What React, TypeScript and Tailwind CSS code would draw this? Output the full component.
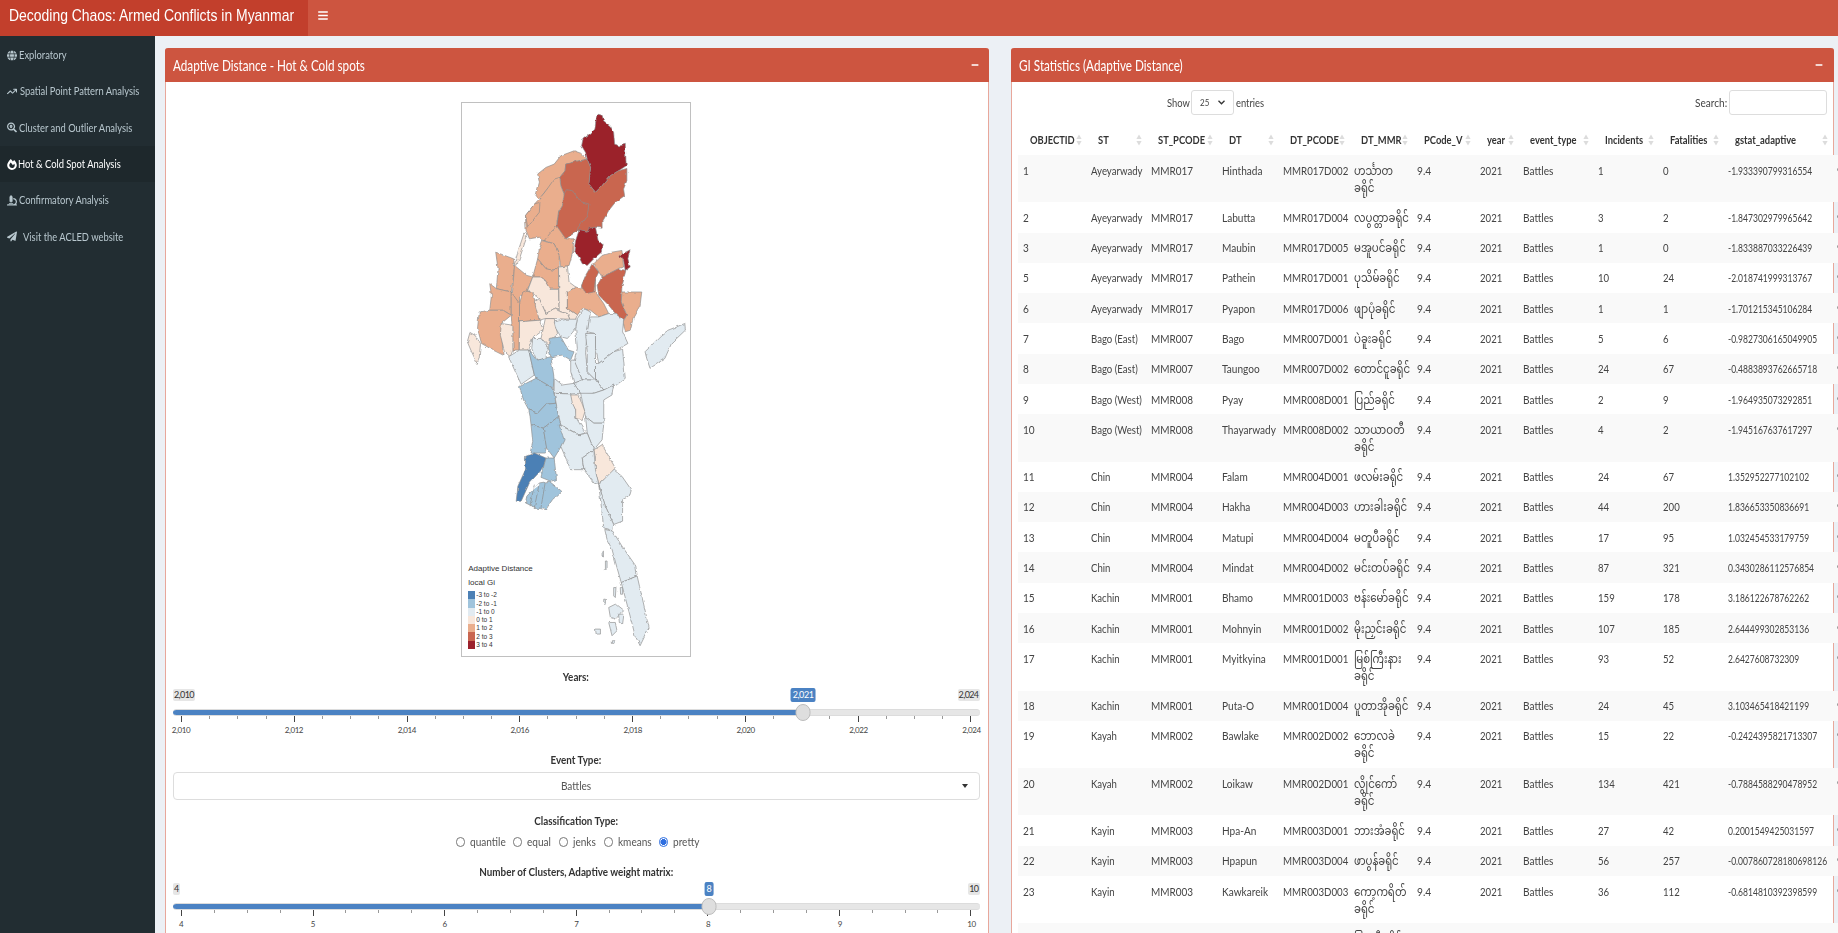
import { FaBars, FaFireAlt, FaGlobe, FaMicroscope, FaMinus, FaPaperPlane, FaSearchLocation } from "react-icons/fa";
import { FaArrowTrendUp } from "react-icons/fa6";
import type { ReactNode } from "react";

const font = "font-['Lato','Noto_Sans_Myanmar',sans-serif]";

const menu = [
  { label: "Exploratory", Icon: FaGlobe, gap: "" },
  { label: "Spatial Point Pattern Analysis", Icon: FaArrowTrendUp, gap: "ml-[1px]" },
  { label: "Cluster and Outlier Analysis", Icon: FaSearchLocation, gap: "" },
  { label: "Hot & Cold Spot Analysis", Icon: FaFireAlt, active: true, gap: "-ml-[1px]" },
  { label: "Confirmatory Analysis", Icon: FaMicroscope, gap: "" },
  { label: "Visit the ACLED website", Icon: FaPaperPlane, gap: "ml-[4px]" },
];

const headers = ["OBJECTID", "ST", "ST_PCODE", "DT", "DT_PCODE", "DT_MMR", "PCode_V", "year", "event_type", "Incidents", "Fatalities", "gstat_adaptive"];

const rows = [
  ["1", "Ayeyarwady", "MMR017", "Hinthada", "MMR017D002", "ဟင်္သာတ\nခရိုင်", "1", "0", "-1.933390799316554"],
  ["2", "Ayeyarwady", "MMR017", "Labutta", "MMR017D004", "လပွတ္တာခရိုင်", "3", "2", "-1.847302979965642"],
  ["3", "Ayeyarwady", "MMR017", "Maubin", "MMR017D005", "မအူပင်ခရိုင်", "1", "0", "-1.833887033226439"],
  ["5", "Ayeyarwady", "MMR017", "Pathein", "MMR017D001", "ပုသိမ်ခရိုင်", "10", "24", "-2.018741999313767"],
  ["6", "Ayeyarwady", "MMR017", "Pyapon", "MMR017D006", "ဖျာပုံခရိုင်", "1", "1", "-1.701215345106284"],
  ["7", "Bago (East)", "MMR007", "Bago", "MMR007D001", "ပဲခူးခရိုင်", "5", "6", "-0.9827306165049905"],
  ["8", "Bago (East)", "MMR007", "Taungoo", "MMR007D002", "တောင်ငူခရိုင်", "24", "67", "-0.4883893762665718"],
  ["9", "Bago (West)", "MMR008", "Pyay", "MMR008D001", "ပြည်ခရိုင်", "2", "9", "-1.964935073292851"],
  ["10", "Bago (West)", "MMR008", "Thayarwady", "MMR008D002", "သာယာဝတီ\nခရိုင်", "4", "2", "-1.945167637617297"],
  ["11", "Chin", "MMR004", "Falam", "MMR004D001", "ဖလမ်းခရိုင်", "24", "67", "1.352952277102102"],
  ["12", "Chin", "MMR004", "Hakha", "MMR004D003", "ဟားခါးခရိုင်", "44", "200", "1.836653350836691"],
  ["13", "Chin", "MMR004", "Matupi", "MMR004D004", "မတူပီခရိုင်", "17", "95", "1.032454533179759"],
  ["14", "Chin", "MMR004", "Mindat", "MMR004D002", "မင်းတပ်ခရိုင်", "87", "321", "0.3430286112576854"],
  ["15", "Kachin", "MMR001", "Bhamo", "MMR001D003", "ဗန်းမော်ခရိုင်", "159", "178", "3.186122678762262"],
  ["16", "Kachin", "MMR001", "Mohnyin", "MMR001D002", "မိုးညှင်းခရိုင်", "107", "185", "2.644499302853136"],
  ["17", "Kachin", "MMR001", "Myitkyina", "MMR001D001", "မြစ်ကြီးနား\nခရိုင်", "93", "52", "2.6427608732309"],
  ["18", "Kachin", "MMR001", "Puta-O", "MMR001D004", "ပူတာအိုခရိုင်", "24", "45", "3.103465418421199"],
  ["19", "Kayah", "MMR002", "Bawlake", "MMR002D002", "ဘောလခဲ\nခရိုင်", "15", "22", "-0.2424395821713307"],
  ["20", "Kayah", "MMR002", "Loikaw", "MMR002D001", "လွိုင်ကော်\nခရိုင်", "134", "421", "-0.7884588290478952"],
  ["21", "Kayin", "MMR003", "Hpa-An", "MMR003D001", "ဘားအံခရိုင်", "27", "42", "0.2001549425031597"],
  ["22", "Kayin", "MMR003", "Hpapun", "MMR003D004", "ဖာပွန်ခရိုင်", "56", "257", "-0.007860728180698126"],
  ["23", "Kayin", "MMR003", "Kawkareik", "MMR003D003", "ကော့ကရိတ်\nခရိုင်", "36", "112", "-0.6814810392398599"],
  ["24", "Kayin", "MMR003", "Myawaddy", "MMR003D002", "မြဝတီခရိုင်", "12", "30", "-0.5120394857120394"],
];

const c = { r3: "#9b212c", r2: "#c96650", r1: "#eaae8d", r0: "#f8e7db", b0: "#e2ebf1", b1: "#a0c4dc", b2: "#4c80b5" };

// coordinates are 3x page pixels, measured from (440,95)
const regions: [string, string][] = [
  [c.r3, "478,55 490,58 495,75 515,90 525,110 528,145 545,150 560,145 563,210 540,225 515,240 490,270 470,290 450,265 455,215 445,190 440,170 428,150 432,130 455,112 468,100 472,70"],
  [c.r1, "365,180 405,165 425,172 445,190 420,195 380,205 378,225 362,245 340,265 320,285 300,310 290,300 300,260 295,235 320,215 345,205"],
  [c.r2, "380,205 420,195 445,190 455,215 450,265 470,290 490,270 515,240 540,225 565,218 565,255 555,280 558,300 530,320 510,345 490,380 490,398 470,395 445,410 415,405 380,430 352,405 358,350 370,330 375,295 365,270 362,245 378,225"],
  [c.r2, "375,295 382,282 400,285 425,318 450,325 445,360 418,395 415,405 380,430 352,405 358,350 370,330"],
  [c.r1, "345,250 362,245 365,270 375,295 370,330 358,350 352,390 325,435 310,435 300,425 270,430 260,405 258,360 290,320 300,310 320,285"],
  [c.r1, "258,360 285,325 302,320 300,350 280,375 265,395"],
  [c.r1, "352,390 380,430 405,430 400,475 390,510 365,515 360,480 345,445 315,435"],
  [c.r1, "310,435 345,445 360,480 360,520 335,525 320,520 295,490 300,460"],
  [c.r3, "420,405 445,410 450,398 470,395 478,435 490,445 488,470 465,490 445,510 430,505 420,485 405,465 410,435"],
  [c.r0, "255,410 262,425 255,445 240,490 232,510 225,505 238,460"],
  [c.r1, "168,470 195,480 222,490 225,520 215,590 190,585 170,580 175,520"],
  [c.r1, "225,510 262,540 280,545 262,590 240,605 240,625 218,600"],
  [c.r1, "280,545 295,490 320,520 345,525 358,515 358,582 332,582 310,545"],
  [c.r0, "280,545 310,545 332,582 358,582 360,645 345,640 320,655 300,610 280,590 265,585"],
  [c.r0, "358,515 385,512 390,560 410,575 385,590 385,640 415,660 400,692 385,655 365,650 360,645"],
  [c.r1, "240,625 250,590 265,585 280,590 300,675 240,680"],
  [c.r1, "150,565 170,580 215,590 215,660 190,645 150,645 155,600"],
  [c.r1, "118,650 150,645 190,645 215,660 185,685 190,780 160,765 125,745 113,700"],
  [c.r1, "215,590 240,625 240,680 238,765 220,765 218,700 215,660"],
  [c.r0, "185,685 220,690 220,765 212,785 195,770 182,720"],
  [c.r0, "90,712 105,720 122,745 118,790 112,805 95,770 82,740"],
  [c.r0, "240,680 300,675 312,705 280,728 265,765 240,765"],
  [c.r0, "318,670 345,670 355,715 325,750 305,730 312,700"],
  [c.r0, "285,620 300,610 320,655 345,640 365,650 385,655 400,692 385,672 345,670 318,670 300,675"],
  [c.r1, "385,590 410,575 425,578 440,545 470,550 470,590 495,625 510,655 480,665 455,645 430,640 415,660 385,640"],
  [c.r2, "440,540 460,505 480,530 470,550 465,590 440,595 428,570"],
  [c.r1, "465,505 490,480 520,470 550,465 555,515 540,520 490,545 480,530"],
  [c.r3, "542,480 575,463 568,490 575,515 560,525 555,495"],
  [c.r2, "490,545 540,520 562,525 550,570 548,620 565,660 555,675 530,655 510,630 480,600 475,570"],
  [c.r1, "550,590 610,590 605,630 585,665 575,705 560,710 553,680 565,660 548,620"],
  [c.b0, "450,665 480,665 510,655 530,655 555,675 552,710 568,745 525,770 480,805 470,760 470,715 445,710"],
  [c.b0, "525,770 552,762 560,850 520,880 495,885 470,855 470,805 480,805"],
  [c.b0, "415,670 435,640 455,650 445,710 440,770 445,830 470,855 430,855 405,800 415,760 410,700"],
  [c.b0, "440,715 470,715 470,760 470,855 445,830 445,770"],
  [c.b0, "345,680 385,672 415,672 410,700 385,730 365,725 350,700"],
  [c.b0, "395,795 405,795 430,855 405,865 395,830"],
  [c.b1, "330,730 365,725 388,765 405,770 395,795 370,780 335,785 328,760"],
  [c.b0, "280,730 305,730 325,755 320,790 292,795 277,760"],
  [c.b0, "207,785 240,765 268,765 285,840 245,868 225,825"],
  [c.b1, "268,765 292,795 335,785 345,850 342,880 290,850 285,840"],
  [c.b1, "240,875 290,850 342,880 350,925 320,928 295,955 268,945 252,915"],
  [c.b1, "268,945 295,955 320,928 352,925 358,965 312,1000 275,990 272,965"],
  [c.b1, "275,990 312,1000 322,1055 318,1075 272,1075 280,1040"],
  [c.b1, "312,1000 358,965 378,1035 345,1090 322,1060"],
  [c.b2, "258,1085 285,1075 320,1090 312,1120 270,1165 245,1220 230,1220 235,1175 258,1125"],
  [c.b1, "320,1090 345,1090 352,1155 335,1160 305,1148 312,1120"],
  [c.b1, "262,1205 300,1165 330,1160 368,1190 340,1215 320,1245 290,1240 258,1225"],
  [c.b0, "345,850 370,870 405,865 425,895 395,897 345,895"],
  [c.b0, "405,865 430,855 470,855 495,885 465,895 430,900 425,895"],
  [c.b0, "425,895 465,895 495,885 525,870 520,900 495,915 495,985 465,985 440,965"],
  [c.b0, "345,895 395,897 410,945 415,975 440,1015 420,1020 365,990 355,945"],
  [c.r0, "395,900 420,900 438,950 430,977 410,970 410,945 400,925"],
  [c.b0, "440,965 465,985 495,985 490,1035 465,1065 445,1015"],
  [c.b0, "360,990 420,1020 445,1015 465,1065 430,1090 435,1125 395,1125 365,1055 375,1035"],
  [c.r0, "465,1065 490,1050 530,1120 510,1145 480,1167 468,1125 470,1090"],
  [c.b0, "430,1090 465,1065 470,1125 480,1170 465,1165 435,1125"],
  [c.b0, "480,1170 525,1125 550,1145 578,1185 572,1205 552,1215 552,1280 525,1290 500,1235 490,1205"],
  [c.b0, "480,1170 500,1235 525,1290 522,1310 495,1300"],
  [c.b0, "498,1305 522,1310 550,1355 592,1415 596,1445 548,1465 535,1420 520,1365 505,1335"],
  [c.b0, "548,1465 596,1445 632,1600 605,1655 590,1625 572,1555"],
  [c.b0, "620,770 670,720 690,705 740,685 742,705 700,745 680,790 635,820 625,790"],
  [c.b0, "510,1540 530,1530 555,1550 530,1575 515,1570"],
  [c.b0, "510,1585 530,1585 535,1610 520,1625"],
  [c.b0, "540,1560 556,1560 552,1590 542,1585"],
  [c.b0, "470,1605 485,1605 485,1620 472,1620"],
  [c.b0, "525,1480 532,1480 530,1510 525,1505"],
  [c.b0, "545,1480 552,1480 552,1500 546,1500"],
  [c.b0, "495,1515 500,1515 500,1530 495,1530"],
  [c.b0, "490,1370 494,1370 494,1385 490,1385"],
  [c.b0, "500,1400 505,1400 505,1425 500,1425"],
  [c.b0, "518,1640 526,1640 526,1648 518,1648"],
];

const legend = [
  [c.b2, "-3 to -2"],
  [c.b1, "-2 to -1"],
  [c.b0, "-1 to 0"],
  [c.r0, "0 to 1"],
  [c.r1, "1 to 2"],
  [c.r2, "2 to 3"],
  [c.r3, "3 to 4"],
];

function N({ children, className = "origin-left scale-x-[0.84]" }: { children: ReactNode; className?: string }) {
  return <span className={`inline-block whitespace-pre ${className}`}>{children}</span>;
}

function Slider({ min, max, value, sub, labels, fmt }: { min: number; max: number; value: number; sub: number; labels: number[]; fmt: (n: number) => string }) {
  const f = (value - min) / (max - min);
  const left = `calc(8px + ${f} * (100% - 16px))`;
  const ticks = (labels.length - 1) * sub + 1;
  return (
    <div className="relative">
      <div className="flex justify-between h-[12px]">
        <span className="bg-[#e6e6e6] rounded-[2px] px-[1px] text-[9px] leading-[12px] text-[#333] tracking-[-0.6px]">{fmt(min)}</span>
        <span className="bg-[#e6e6e6] rounded-[2px] px-[1px] text-[9px] leading-[12px] text-[#333] tracking-[-0.6px]">{fmt(max)}</span>
      </div>
      <span
        className="absolute top-[-1px] ml-[1px] -translate-x-1/2 bg-[#4b82c3] rounded-[2px] px-[2px] text-[9px] leading-[14px] text-white tracking-[-0.4px]"
        style={{ left }}
      >
        {fmt(value)}
      </span>
      <div className="mt-[8px] h-[7px] rounded-full bg-[#e6e6e6] border-y border-[#dcdcdc] overflow-hidden">
        <div className="h-full bg-[#4b82c3]" style={{ width: left }} />
      </div>
      <div
        className="absolute top-[15px] ml-[1px] w-[15px] h-[17px] -translate-x-1/2 rounded-full bg-[#dedede] border border-[#bdbdbd]"
        style={{ left }}
      />
      <div className="flex justify-between mx-[8px] h-[6px] items-start">
        {Array.from({ length: ticks }, (_, i) => (
          <span key={i} className={i % sub === 0 ? "w-px h-[6px] bg-[#444]" : "w-px h-[3px] bg-[#999]"} />
        ))}
      </div>
      <div className="flex justify-between mx-[8px] mt-[3px]">
        {labels.map((l) => (
          <span key={l} className="w-0 flex justify-center text-[8px] leading-[10px] text-[#444] tracking-[-0.4px]">
            {fmt(l)}
          </span>
        ))}
      </div>
    </div>
  );
}

function SortArrows() {
  return (
    <svg width="6" height="12" viewBox="0 0 6 12" className="shrink-0">
      <path d="M3 0.5 L5.6 5 H0.4 Z" fill="#dcdcdc" />
      <path d="M3 11.5 L5.6 7 H0.4 Z" fill="#dcdcdc" />
    </svg>
  );
}

function Label({ children }: { children: string }) {
  return (
    <div className="text-center text-[12px] leading-[14px] font-bold text-[#333]">
      <N className="origin-center scale-x-[0.82]">{children}</N>
    </div>
  );
}

const cellScale = [
  "origin-left scale-x-[0.84]",
  "origin-left scale-x-[0.8]",
  "origin-left scale-x-[0.83]",
  "origin-left scale-x-[0.84]",
  "origin-left scale-x-[0.81]",
  "origin-left scale-x-[0.85]",
  "origin-left scale-x-[0.85]",
  "origin-left scale-x-[0.8]",
  "origin-left scale-x-[0.84]",
  "origin-left scale-x-[0.8]",
  "origin-left scale-x-[0.8]",
  "origin-left scale-x-[0.71]",
  "origin-left scale-x-[0.8]",
];

const radios = [
  ["quantile", "w-[34px]"],
  ["equal", "w-[23px]"],
  ["jenks", "w-[22px]"],
  ["kmeans", "w-[32px]"],
  ["pretty", "w-[24px]"],
];

export default function App() {
  const colWidths = ["w-[68px]", "w-[60px]", "w-[71px]", "w-[61px]", "w-[71px]", "w-[63px]", "w-[63px]", "w-[43px]", "w-[75px]", "w-[65px]", "w-[65px]", "w-[109px]", "w-[60px]"];
  return (
    <div className={`h-[933px] overflow-hidden bg-[#ecf0f5] flex flex-col ${font}`}>
      <header className="h-[36px] shrink-0 flex bg-[#cd5540] text-white">
        <div className="w-[308px] bg-[#c23f2c] pl-[9px] text-[17px] leading-[31px] font-['Liberation_Sans',sans-serif] whitespace-nowrap">
          <N className="origin-left scale-x-[0.82]">Decoding Chaos: Armed Conflicts in Myanmar</N>
        </div>
        <FaBars className="ml-[10px] mt-[10px] w-[10px] h-[11px]" />
      </header>

      <div className="flex flex-1 min-h-0">
        <aside className="w-[155px] shrink-0 bg-[#222d32] text-[#b8c7ce] text-[12px] pt-[1px]">
          {menu.map(({ label, Icon, active, gap }) => (
            <div key={label} className={`h-[36.3px] flex items-center pl-[7px] gap-[2px] ${active ? "bg-[#1e282c] text-white" : ""}`}>
              <Icon className="w-[10px] h-[11px] shrink-0" />
              <span className={gap}>
                <N className="origin-left scale-x-[0.78]">{label}</N>
              </span>
            </div>
          ))}
        </aside>

        <main className="flex-1 min-w-0 grid grid-cols-2 gap-[22px] pl-[10px] pr-[4px] pt-[12px]">
          <section className="bg-white border-x border-[#e8a79b] rounded-t-[3px] h-[1000px]">
            <div className="h-[34px] -mx-px bg-[#cd5540] rounded-t-[3px] flex items-center justify-between pl-[8px] pr-[10px] text-white text-[15px]">
              <N className="origin-left scale-x-[0.78]">Adaptive Distance - Hot &amp; Cold spots</N>
              <FaMinus className="w-[8px] h-[8px]" />
            </div>
            <div className="pt-[20px] pl-[7px] pr-[8px]">
              <div className="relative mx-auto w-[230px] h-[555px] border border-[#c0c0c0]">
                <svg viewBox="66 21 690 1665" className="w-full h-full" preserveAspectRatio="none">
                  <filter id="rough" x="-5%" y="-5%" width="110%" height="110%">
                    <feTurbulence type="fractalNoise" baseFrequency="0.06" numOctaves="2" seed="4" />
                    <feDisplacementMap in="SourceGraphic" scale="9" xChannelSelector="R" yChannelSelector="G" />
                  </filter>
                  <g filter="url(#rough)">
                    {regions.map(([fill, points], i) => (
                      <polygon key={i} points={points} fill={fill} stroke="#8c8c8c" strokeWidth="2" strokeLinejoin="round" />
                    ))}
                    <path d="M285,1170 L272,1235 M300,1165 L285,1240 M318,1162 L305,1240" stroke="#8a8a8a" strokeWidth="2" fill="none" />
                    <path d="M300,1165 L262,1200 L300,1172 Z" fill="white" />
                  </g>
                </svg>
                <div className="absolute left-[6px] bottom-[7px] font-['Liberation_Sans',sans-serif] text-[#333]">
                  <div className="text-[8px] leading-[14px]">Adaptive Distance</div>
                  <div className="text-[8px] leading-[14px] mb-[1px]">local Gi</div>
                  {legend.map(([col, text]) => (
                    <div key={text} className="flex items-center h-[8.3px] text-[6.5px] gap-[1px]">
                      <span className="w-[7px] h-full" style={{ background: col }} />
                      {text}
                    </div>
                  ))}
                </div>
              </div>

              <div className="mt-[13px] mb-[5px]"><Label>Years:</Label></div>
              <Slider min={2010} max={2024} value={2021} sub={4} labels={[2010, 2012, 2014, 2016, 2018, 2020, 2022, 2024]} fmt={(n) => n.toLocaleString("en-US")} />

              <div className="mt-[18px] mb-[5px]"><Label>Event Type:</Label></div>
              <div className="relative h-[28px] border border-[#ddd] rounded-[4px] flex items-center justify-center text-[12px] text-[#555]">
                <N className="origin-center scale-x-[0.84]">Battles</N>
                <span className="absolute right-[11px] top-[11px] w-0 h-0 border-x-[3.5px] border-x-transparent border-t-[4px] border-t-[#333]" />
              </div>

              <div className="mt-[14px] mb-[7px]"><Label>Classification Type:</Label></div>
              <div className="flex justify-center items-center text-[12px] text-[#555] h-[14px] gap-[9px]">
                {radios.map(([o, w]) => (
                  <label key={o} className="flex items-center gap-[5px]">
                    <span className={`w-[9px] h-[10px] rounded-full border ${o === "pretty" ? "border-[#2f6fe0] bg-[radial-gradient(circle,#2f6fe0_55%,white_60%)]" : "border-[#777]"}`} />
                    <span className={w}><N>{o}</N></span>
                  </label>
                ))}
              </div>

              <div className="mt-[16px] mb-[4px]"><Label>Number of Clusters, Adaptive weight matrix:</Label></div>
              <Slider min={4} max={10} value={8} sub={4} labels={[4, 5, 6, 7, 8, 9, 10]} fmt={(n) => String(n)} />
            </div>
          </section>

          <section className="bg-white border-x border-[#e8a79b] rounded-t-[3px] h-[1000px]">
            <div className="h-[34px] -mx-px bg-[#cd5540] rounded-t-[3px] flex items-center justify-between pl-[8px] pr-[11px] text-white text-[15px]">
              <N className="origin-left scale-x-[0.78]">GI Statistics (Adaptive Distance)</N>
              <FaMinus className="w-[8px] h-[8px]" />
            </div>
            <div className="pl-[6px] pt-[8px] text-[12px] text-[#444]">
              <div className="flex h-[25px] items-center pr-[6px]">
                <div className="ml-[149px] flex items-center">
                  <span className="w-[24px]"><N className="origin-left scale-x-[0.78]">Show</N></span>
                  <span className="w-[43px] h-[25px] border border-[#ddd] rounded-[3px] flex items-center justify-between px-[8px] text-[10px]">
                    <N className="origin-left scale-x-[0.8]">25</N>
                    <svg width="7" height="5" viewBox="0 0 7 5"><path d="M0.5 0.8 L3.5 3.8 L6.5 0.8" fill="none" stroke="#333" strokeWidth="1.3" /></svg>
                  </span>
                  <span className="ml-[2px]"><N className="origin-left scale-x-[0.78]">entries</N></span>
                </div>
                <div className="ml-auto flex items-center">
                  <span className="w-[34px]"><N>Search:</N></span>
                  <span className="w-[98px] h-[25px] border border-[#ddd] rounded-[3px]" />
                </div>
              </div>

              <table className="table-fixed w-[874px] mt-[10px] border-collapse">
                <colgroup>
                  {colWidths.map((w, i) => <col key={i} className={w} />)}
                </colgroup>
                <thead>
                  <tr className="h-[30px]">
                    {headers.map((h) => (
                      <th key={h} className="pl-[12px] pr-[4px] text-left font-bold text-[#333]">
                        <div className="flex items-center">
                          <div className="flex-1 w-0"><N className="origin-left scale-x-[0.78]">{h}</N></div>
                          <SortArrows />
                        </div>
                      </th>
                    ))}
                    <th />
                  </tr>
                </thead>
                <tbody>
                  {rows.map((r, i) => (
                    <tr key={r[0]} className={i % 2 === 0 ? "bg-[#f9f9f9]" : ""}>
                      {[r[0], r[1], r[2], r[3], r[4], r[5], "9.4", "2021", "Battles", r[6], r[7], r[8], "9"].map((v, j) => (
                        <td key={j} className="pl-[5px] pr-0 py-[6.65px] align-top leading-[17px]">
                          <N className={cellScale[j]}>{v}</N>
                        </td>
                      ))}
                    </tr>
                  ))}
                </tbody>
              </table>
            </div>
          </section>
        </main>
      </div>
    </div>
  );
}
